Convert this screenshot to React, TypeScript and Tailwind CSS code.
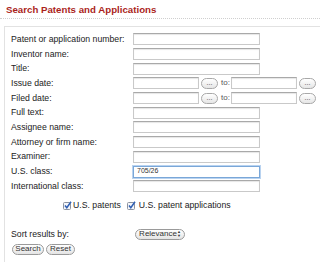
import React from 'react';

const fields: { label: string; kind?: 'date'; value?: string; focus?: boolean }[] = [
  { label: 'Patent or application number:' },
  { label: 'Inventor name:' },
  { label: 'Title:' },
  { label: 'Issue date:', kind: 'date' },
  { label: 'Filed date:', kind: 'date' },
  { label: 'Full text:' },
  { label: 'Assignee name:' },
  { label: 'Attorney or firm name:' },
  { label: 'Examiner:' },
  { label: 'U.S. class:', value: '705/26', focus: true },
  { label: 'International class:' },
];

function TextBox({ width, value, focus }: { width: string; value?: string; focus?: boolean }) {
  return (
    <div
      className={`${width} flex h-[12px] items-center bg-white pl-[3px] text-[7px] text-[#333] ${
        focus
          ? 'border border-[#7aa7d8] shadow-[0_0_0_1px_#b9d3f0]'
          : 'border border-[#c9c9c9] border-t-[#a9a9a9] shadow-[inset_0_1px_1px_#e6e6e6]'
      }`}
    >
      {value}
    </div>
  );
}

function DotsButton() {
  return (
    <div className="flex h-[11px] w-[17px] items-center justify-center rounded-full border border-[#a8a8a8] bg-gradient-to-b from-white to-[#e6e6e6] pb-[2px] text-[7px] leading-none text-[#444]">
      ...
    </div>
  );
}

function Check() {
  return (
    <svg width="9" height="9" viewBox="0 0 9 9" className="shrink-0">
      <rect x="0.5" y="1.5" width="7" height="7" rx="1" fill="#f4f6fa" stroke="#8c93a0" />
      <path d="M2 4.5 L3.8 6.8 L8 0.8" fill="none" stroke="#2f5fb3" strokeWidth="1.5" />
    </svg>
  );
}

function Pill({ children, className }: { children: React.ReactNode; className?: string }) {
  return (
    <div
      className={`flex h-[11px] items-center justify-center rounded-full border border-[#9a9a9a] bg-gradient-to-b from-white to-[#e4e4e4] text-[8px] leading-none text-[#333] ${className ?? ''}`}
    >
      {children}
    </div>
  );
}

export default function App() {
  return (
    <div className="h-[262px] w-[320px] overflow-hidden bg-white font-['Liberation_Sans',Arial,sans-serif] text-[#222]">
      <div className="border-b border-dotted border-[#cfcfcf] pb-[2px] pl-[6px] pt-[4px] text-[9.7px] font-bold leading-[12px] text-[#ab1f1c]">
        Search Patents and Applications
      </div>

      <div className="ml-[4px] mt-[7px] border-l border-t border-[#e2e2e2] pl-[6px] pt-[5px]">
        <div className="flex flex-col">
          {fields.map((f) => (
            <div key={f.label} className="flex h-[14.7px] items-center text-[8.7px]">
              <div className="w-[122px] shrink-0">{f.label}</div>
              {f.kind === 'date' ? (
                <div className="flex items-center">
                  <TextBox width="w-[66px]" />
                  <div className="ml-[2px]">
                    <DotsButton />
                  </div>
                  <span className="ml-[3px] w-[10px] text-[8px] text-[#555]">to:</span>
                  <TextBox width="w-[66px]" />
                  <div className="ml-[2px]">
                    <DotsButton />
                  </div>
                </div>
              ) : (
                <TextBox width="w-[127px]" value={f.value} focus={f.focus} />
              )}
            </div>
          ))}
        </div>

        <div className="mt-[5px] flex items-center pl-[52px] text-[8.7px]">
          <Check />
          <span className="ml-[1px]">U.S. patents</span>
          <span className="ml-[6px]">
            <Check />
          </span>
          <span className="ml-[3px]">U.S. patent applications</span>
        </div>

        <div className="mt-[16px] flex items-center text-[8.7px]">
          <div className="w-[124px] shrink-0">Sort results by:</div>
          <Pill className="w-[50px] justify-between rounded-[5px] px-[5px] text-[7px]">
            <span>Relevance</span>
            <span className="flex flex-col text-[4px] leading-[4px]">
              <span>▲</span>
              <span>▼</span>
            </span>
          </Pill>
        </div>

        <div className="mt-[3px] flex items-center gap-[2px] pl-[1px]">
          <Pill className="w-[32px]">Search</Pill>
          <Pill className="w-[29px]">Reset</Pill>
        </div>
        <div className="h-[20px]" />
      </div>
    </div>
  );
}
